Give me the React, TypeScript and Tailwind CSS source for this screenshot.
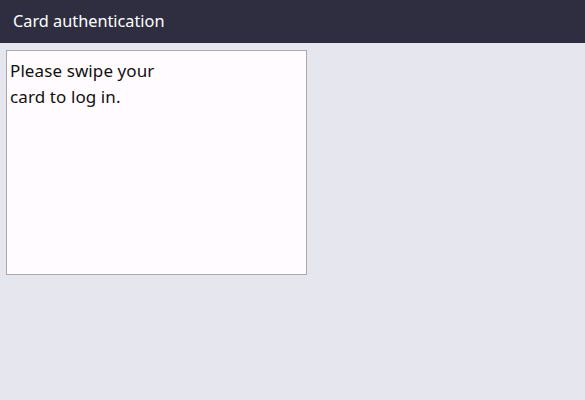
export default function App() {
  return (
    <div className="w-[585px] h-[400px] bg-[#e6e6ee] flex flex-col font-['Noto_Sans',sans-serif]">
      <div className="h-[43px] bg-[#2f2e40] flex items-center px-[13px]">
        <h1 className="text-white text-[16.3px] leading-none pb-[1px]">Card authentication</h1>
      </div>
      <div className="pl-[6px] pt-[7px]">
        <div className="w-[301px] h-[225px] bg-[#fffbfe] border border-[#a9a9ae] px-[3px] pt-[7px]">
          <p className="text-[#111] text-[17px] leading-[26px] tracking-[0.1px]">
            Please swipe your
            <br />
            card to log in.
          </p>
        </div>
      </div>
    </div>
  );
}
